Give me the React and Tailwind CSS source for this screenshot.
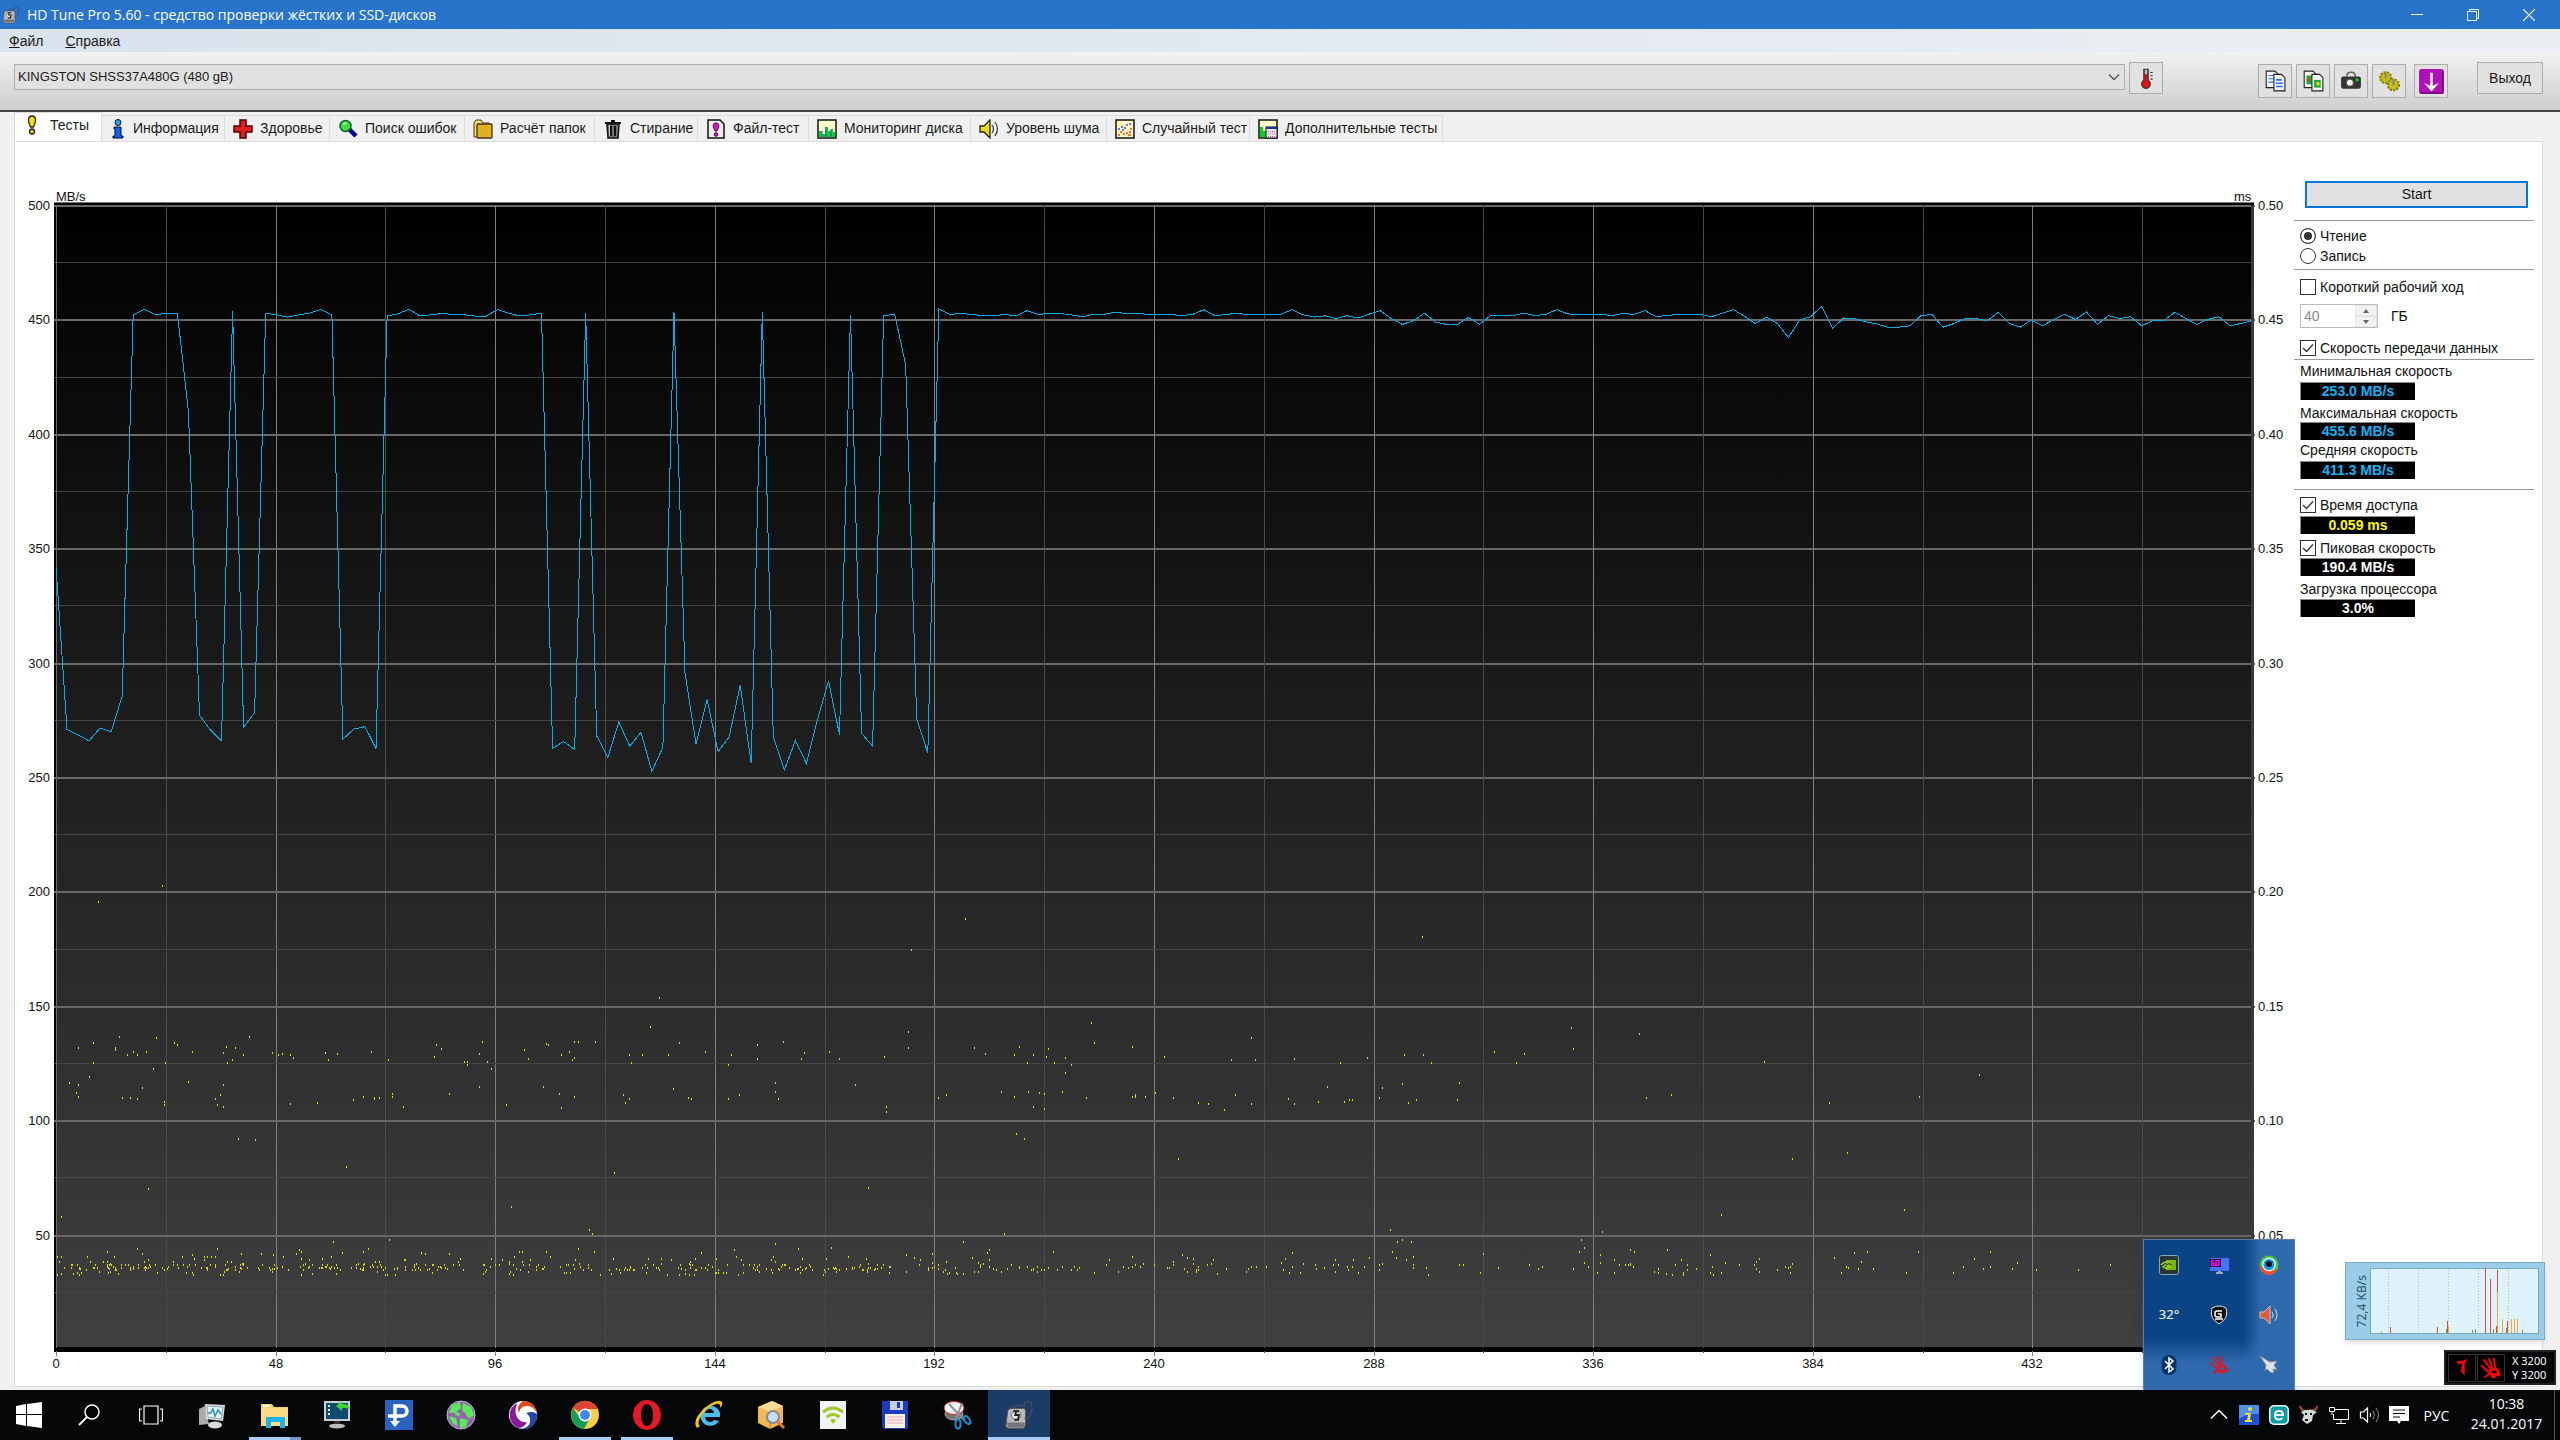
import React from "react";

/* ---------- benchmark data ---------- */

// Transfer rate samples in MB/s, evenly spaced over the disk
const RATES = [
  342, 270.8, 268.4, 265.8, 271.4, 269.8, 285.4, 452, 454.4, 452, 452.7, 452.7, 410, 277, 270.5, 265.8, 453.5, 271.7, 278, 452.7,
  452, 451, 452, 452.7, 454.4, 452, 266.5, 271, 272, 262.5, 451.5, 452.5, 454.4, 451.5, 452, 452.7, 452, 452, 451.5, 451.5,
  454.3, 452.7, 451.5, 452, 452.7, 262.5, 265.5, 262, 452.8, 268, 258.5, 274, 263.5, 269.5, 252.5, 263, 453, 295.5, 264.5, 284,
  261, 267.5, 290, 256, 453, 267.5, 253, 266, 256, 275, 292, 268.5, 452, 269, 263.5, 451.5, 452.3, 430, 275.5, 260.5,
  454.5, 452.2, 452.6, 452.2, 451.6, 451.6, 452.2, 451.5, 453.8, 452.2, 452.6, 452.6, 452, 451.2, 452.2, 452.2, 453.2, 452.5, 452.6, 452.2,
  452.2, 452.2, 451.6, 452.2, 454.3, 451.6, 452.2, 452.6, 452.2, 452.2, 452.2, 452.2, 454.3, 452, 451, 451.6, 450.4, 451.6, 450.6, 452.3,
  453.8, 450.4, 447.8, 449.4, 452.7, 448.8, 447.8, 447.8, 450.9, 447.8, 451.6, 451.6, 451.6, 452.7, 451.7, 452.2, 454.3, 452.4, 452.2, 452.2,
  452.2, 451.7, 452.6, 452.2, 453.8, 451.2, 451.7, 452.2, 452.2, 452.2, 451.2, 452.7, 454.3, 451.4, 448.2, 451, 448.2, 442.1, 449.7, 451.2,
  455.6, 446.2, 450.6, 450.3, 449, 448, 446.6, 446.6, 447.2, 451.6, 452.2, 446.6, 448.2, 450.4, 450.4, 449.4, 453, 448.2, 446.6, 449.7,
  447.2, 449.8, 452.3, 450, 453.2, 447.8, 451.6, 450.4, 451.2, 447.2, 449.4, 449.4, 453.2, 450.4, 447.8, 450, 451.2, 447.2, 448.2, 449.4,
];

// Access time samples, stored per segment in its own sampling grid
const SEGMENT_A = [
  [1148,51],[1133,137],[208,167],[271,171],[162,186],[304,186],[308,193],[136,201],[201,201],[201,208],[232,212],[254,212],[221,223],[238,223],[334,212],[162,246],[288,246],
  [434,167],[393,197],[410,201],[389,216],[424,223],[404,238],[395,246],[473,216],[484,223],[491,219],[506,223],[510,231],[267,264],[155,287],[121,306],[136,313],[132,336],[136,347],
  [247,321],[327,302],[389,313],[212,351],[227,351],[238,354],[286,362],[286,373],[384,343],[374,354],[378,373],[389,377],[567,216],[587,219],[571,238],[646,212],[676,238],
  [759,193],[768,204],[756,227],[839,182],[835,219],[809,242],[813,242],[813,253],[848,242],[855,264],[835,317],[783,339],[506,369],[552,366],[615,358],[632,347],[652,350],[652,354],[661,350],[683,339],[683,347],[702,377],
  [913,208],[920,234],[951,189],[954,193],[1000,182],[1007,182],[1037,182],[992,212],[977,223],[1000,231],[996,238],[1096,223],[1118,223],[1100,246],[1164,223],[1183,186],[1229,212],[1273,223],[1268,253],
  [1319,193],[1319,234],[1364,182],[1401,216],[1395,234],[1445,212],[1462,234],[1540,227],[946,317],[974,339],[1000,347],[881,373],[977,381],[1085,343],[1096,354],[1088,366],[1172,324],[1199,351],[1203,354],[1268,354],[1288,343],
  [1351,306],[1351,332],[1355,354],[1490,313],[1543,377],[1543,392],[415,474],[445,478],[602,557],[1070,576],[258,624],[1513,621],[106,707],[890,677],[1026,748],[1031,759],[580,782],[678,778],[1351,789],[1447,800],[1390,804],
  [186,812],[238,804],[378,804],[247,819],[334,823],[419,819],[454,819],[475,823],[521,808],[525,812],[515,819],[595,816],[641,804],[632,814],[733,816],[741,819],[783,819],[905,812],[909,812],[951,812],[1007,804],[1035,812],[1222,816],[1279,808],
  [282,-285],[171,-237],[1587,-93],[1681,-186],[2477,-132],
];
const SEGMENT_B = [
  [10,152],[10,201],[89,201],[102,219],[144,197],[137,223],[160,223],[176,227],[179,205],[153,246],[186,246],[199,231],[199,276],[206,253],[230,126],[234,186],[280,197],[319,227],[423,171],[399,238],[428,238],[475,234],[531,246],[563,231],[608,223],[631,223],[640,246],
  [46,351],[55,343],[122,332],[155,332],[168,336],[174,339],[195,332],[137,347],[224,351],[280,347],[284,343],[284,347],[295,347],[308,336],[329,351],[360,366],[372,369],[391,388],[404,343],[423,369],[468,354],[475,369],[515,317],[504,362],[535,362],[542,358],[545,358],[581,321],[578,351],[605,309],[613,366],[623,358],[674,306],[672,358],
  [160,377],[174,384],[140,459],[150,474],[335,534],[809,141],[892,160],[812,204],[717,212],[753,219],[743,246],[1042,242],[1301,283],[900,351],[930,343],[1121,366],[1229,347],[1142,516],[1076,534],[1211,688],[990,703],[591,748],[847,752],[125,759],[76,782],
  [600,782],[605,778],[616,782],[822,778],[825,801],[819,812],[7,823],[17,831],[38,819],[107,808],[105,816],[87,831],[185,812],[252,838],[280,827],[340,823],[346,831],[353,834],[378,838],[473,816],[465,834],[459,846],[525,838],[547,838],[566,831],[594,812],[598,831],[619,827],[610,838],[703,819],
  [844,823],[881,808],[886,812],[925,808],[942,838],[977,823],[1036,834],[1033,842],[1127,831],[1151,816],[1166,812],[1159,842],[1228,812],[1315,812],[1296,834],[1348,846],[1460,853],[1421,868],[1370,868],[1341,864],[1306,864],[1315,857],[1282,857],[1270,876],[1214,876],[1174,864],[1156,864],[1144,860],[1141,857],[1135,876],
  [1076,850],[1073,857],[1068,857],[1071,861],[1074,876],[1058,868],[1033,864],[1036,872],[1030,853],[1012,853],[995,846],[979,857],[977,876],[990,876],[981,883],[960,864],[949,853],[935,853],[949,868],[945,883],[945,876],[931,883],[914,864],[910,872],[914,876],[924,880],[881,850],[878,853],[881,853],[875,853],[867,853],[884,857],[861,838],[861,876],
  [844,846],[841,876],[825,846],[830,857],[812,864],[774,857],[770,864],[759,853],[721,861],[700,876],[674,853],[679,853],[637,883],[634,861],[619,853],[619,861],[581,850],[578,853],[578,868],[560,857],[553,876],[545,857],[539,857],[540,868],[528,853],[522,853],[525,872],[512,861],[500,853],[502,864],[486,850],[483,876],[469,876],[462,868],[473,857],
  [441,857],[430,857],[423,857],[420,864],[417,872],[393,864],[382,880],[375,850],[370,853],[360,857],[357,868],[357,872],[360,868],[353,850],[346,872],[343,864],[329,842],[329,853],[325,861],[322,861],[306,853],[293,850],[290,857],[283,853],[280,857],[275,861],[269,857],[263,872],[248,853],[234,876],[216,861],[213,868],[210,857],[206,868],[195,857],[189,868],[179,861],
  [174,868],[170,868],[165,857],[165,872],[160,864],[160,868],[158,868],[153,857],[143,857],[143,861],[134,853],[129,864],[122,872],[116,868],[112,864],[107,838],[107,857],[100,850],[97,853],[97,857],[94,872],[94,846],[89,872],[76,880],[69,880],[67,876],[66,861],[59,876],[57,880],[56,842],[54,868],[52,872],[46,853],[46,864],[41,857],[38,861],[38,846],[34,861],[34,868],[24,838],[23,853],[7,872],
];

function lowBand() {
  let seed = 20170124;
  const rnd = () => {
    seed = (seed * 1103515245 + 12345) % 2147483648;
    return seed / 2147483648;
  };
  const levels = [853, 853, 853, 853, 857, 857, 861, 861, 861, 865, 865, 868, 868, 868, 872, 876, 880, 883, 850, 842, 834, 838, 829];
  const out = [];
  for (let i = 0; i < 400; i++) {
    const x = 99 + Math.floor(Math.pow(rnd(), 1.15) * 1465);
    out.push([x, levels[Math.floor(rnd() * levels.length)]]);
  }
  return out;
}

const DOTS = [
  ...SEGMENT_A.concat(lowBand()).map(([x, y]) => [Math.round(x * 0.574), Math.round(980 + y / 3)]),
  ...SEGMENT_B.map(([x, y]) => [Math.round(900 + x * 0.829), Math.round(980 + y / 3)]),
];

/* ---------- chart ---------- */

const L = 56, R = 2252, T = 205, B = 1349;
const yOf = (v) => B - (v / 500) * (B - T);
const xOf = (k) => Math.round(L + (k * (R - L)) / 20);

function Chart() {
  const line = RATES.map((v, i) => `${(L + (i * (R - L)) / 199).toFixed(1)},${yOf(v).toFixed(1)}`).join(" ");
  const rows = Array.from({ length: 20 }, (_, i) => i);
  return (
    <svg viewBox="15 142 2279 1244" className="h-full w-full" fontFamily="'Liberation Sans', Arial, sans-serif" fontSize="13" fill="#111" role="img" aria-label="MB/s, ms">
      <defs>
        <linearGradient id="plot" x1="0" y1="0" x2="0" y2="1">
          <stop offset="0" stopColor="#000" />
          <stop offset="1" stopColor="#404040" />
        </linearGradient>
      </defs>
      <rect x="54" y="202" width="2200" height="1150" fill="#000" />
      <rect x="54" y="202" width="2200" height="1" fill="#777" />
      <rect x={L} y={T} width={R - L} height={B - T - 2} fill="url(#plot)" />
      {rows.map((i) => (
        <g key={i}>
          <rect x={54} y={Math.round(yOf(500 - i * 25))} width={i % 2 ? 2198 : 2201} height={i % 2 ? 1 : 2} fill={i % 2 ? "#444" : "#686868"} />
          <rect x={xOf(i)} y={T} width="1" height={i % 2 ? 1148 : 1151} fill={i % 2 ? "#4a4a4a" : "#808080"} />
        </g>
      ))}
      <rect x={L} y={T} width="1" height={B - T} fill="#6a6a6a" />
      <rect x="2251" y={T} width="3" height="1146" fill="#3a3a3a" />
      <rect x="54" y="1348" width="2200" height="3" fill="#000" />
      {DOTS.map(([x, y], i) => (
        <rect key={i} x={x} y={y} width="1" height="2" fill="#d8d810" />
      ))}
      <polyline points={line} fill="none" stroke="#00aeea" strokeWidth="1" shapeRendering="crispEdges" />
      <text x="56" y="201">MB/s</text>
      <text x="2234" y="201">ms</text>
      {Array.from({ length: 10 }, (_, i) => (
        <g key={i}>
          <text x="50" y={Math.round(yOf(500 - i * 50)) + 5} textAnchor="end">{500 - i * 50}</text>
          <text x="2258" y={Math.round(yOf(500 - i * 50)) + 5}>{(0.5 - i * 0.05).toFixed(2)}</text>
        </g>
      ))}
      {Array.from({ length: 10 }, (_, i) => (
        <text key={i} x={xOf(i * 2)} y="1368" textAnchor="middle">{i * 48}</text>
      ))}
    </svg>
  );
}

/* ---------- small drawings ---------- */

const Svg = ({ s = 20, vb = "0 0 20 20", children }) => (
  <svg viewBox={vb} width={s} height={s} className="shrink-0" aria-hidden="true">{children}</svg>
);

const HddIcon = ({ s = 20 }) => (
  <Svg s={s} vb="0 0 32 32">
    <path d="M4 11l3-2h15l1 3v14l-2 4H4l-2-2z" fill="#b9b9b9" stroke="#555" />
    <path d="M3 24h19v5H4z" fill="#777" />
    <circle cx="13" cy="16" r="5" fill="#e4e4e4" stroke="#777" />
    <path d="M10 12h6M13 12l-1 4 4 0-1 5h-4" stroke="#222" strokeWidth="2" fill="none" />
    <path d="M8 9q5-5 14-3V3q4-3 7 0l1 6q-1 7-5 11l-3-1" stroke="#4a4f55" strokeWidth="1.5" fill="none" />
  </Svg>
);

const TABS = [
  ["Тесты", "w-[88px]", <Svg key="i"><path d="M10 1c5 0 4 6 1.500 11h-3C6 7 5 1 10 1z" fill="#f0e000" stroke="#222" strokeWidth="1.300" /><circle cx="10" cy="16.500" r="2.500" fill="#e0d000" stroke="#222" strokeWidth="1.300" /></Svg>],
  ["Информация", "w-[123px]", <svg key="i" viewBox="2 0 16 20" width="16" height="20" className="shrink-0" aria-hidden="true"><circle cx="10" cy="3.500" r="3" fill="#20a8f0" stroke="#012" /><path d="M6 8h7v9h2v2H5v-2h2v-7H6z" fill="#1060f8" stroke="#012" /></svg>],
  ["Здоровье", "w-[105px]", <Svg key="i"><path d="M7 1h6v6h6v6h-6v6H7v-6H1V7h6z" fill="#e02020" stroke="#400" strokeWidth="1.500" /></Svg>],
  ["Поиск ошибок", "w-[135px]", <Svg key="i"><path d="M11 10l7 7" stroke="#000090" strokeWidth="4.500" /><circle cx="7.500" cy="7" r="5.500" fill="#40e040" stroke="#063" strokeWidth="1.500" /><path d="M5 5l3-1" stroke="#dfd" strokeWidth="1.500" /></Svg>],
  ["Расчёт папок", "w-[130px]", <Svg key="i"><path d="M1 4l2-3h5l2 3h6v14H1z" fill="#f0e070" stroke="#432" /><rect x="4" y="5" width="15" height="14" rx="1" fill="#e0b020" stroke="#432" strokeWidth="1.300" /></Svg>],
  ["Стирание", "w-[103px]", <Svg key="i"><path d="M4 5h12l-1 14H5z" fill="#777" stroke="#111" strokeWidth="1.500" /><path d="M2 4h16M8 2h4M8 7v10M12 7v10" stroke="#111" strokeWidth="2" /><path d="M6.500 6v11" stroke="#ccc" /></Svg>],
  ["Файл-тест", "w-[111px]", <Svg key="i"><path d="M2 1h12l4 4v14H2z" fill="#eee" stroke="#111" strokeWidth="1.500" /><path d="M10 4c4 0 3 4 1 8H9C7 8 6 4 10 4z" fill="#e010d0" stroke="#404" /><circle cx="10" cy="15.500" r="1.800" fill="#e010d0" stroke="#404" /></Svg>],
  ["Мониторинг диска", "w-[162px]", <Svg key="i"><rect x="1" y="1" width="18" height="18" fill="#ffffc8" stroke="#111" strokeWidth="1.500" /><path d="M2 18v-6h3v3h3V8h3v4h3v-2h2v3h2v5z" fill="#10d020" /><path d="M5 12v6M9 8v10M14 10v8" stroke="#3050f0" /></Svg>],
  ["Уровень шума", "w-[136px]", <Svg key="i"><path d="M1 7h4l6-6v18l-6-6H1z" fill="#e8d820" stroke="#221" strokeWidth="1.300" /><path d="M13 6q3 4 0 8M16 3q5 7 0 14" fill="none" stroke="#333" strokeWidth="1.200" /></Svg>],
  ["Случайный тест", "w-[143px]", <Svg key="i"><rect x="1" y="1" width="18" height="18" fill="#fff8b8" stroke="#111" strokeWidth="1.500" /><path d="M3 10h2M6 8h2M9 9h2M11 6h2M14 5h2M7 11h2" stroke="#3050e0" strokeWidth="1.300" /><path d="M3 16h2M5 13h2M8 15h2M11 14h2M14 13h2M13 16h3M15 10h2" stroke="#f04030" strokeWidth="1.300" /></Svg>],
  ["Дополнительные тесты", "w-[193px]", <Svg key="i"><rect x="1" y="1" width="18" height="18" fill="#ffffc8" stroke="#111" strokeWidth="1.500" /><path d="M2 18V8h3v4h3v6z" fill="#10d020" /><rect x="8" y="8" width="11" height="11" fill="#eef" stroke="#111" /><path d="M8 9h11" stroke="#1030c0" strokeWidth="2" /><path d="M10 12.500h8M10 15h8M10 17.500h8" stroke="#d05090" strokeDasharray="1 1" /></Svg>],
];

const page = "M2 1h8l3 3v12H2z";
const TOOLS = [
  ["Копировать текст", <Svg key="i" s={22}><path d={page} fill="#f4f4f4" stroke="#222" /><path d="M4 5h5M4 8h6M4 11h6" stroke="#2080f0" /><path d="M9 4h7l3 3v12H9z" fill="#f4f4f4" stroke="#222" /><path d="M11 9h5M11 12h6M11 15h6" stroke="#2070f0" strokeWidth="1.500" /></Svg>],
  ["Копировать снимок", <Svg key="i" s={22}><path d={page} fill="#f4f4f4" stroke="#222" /><path d="M4 5h5v8H4z" fill="#10b030" /><path d="M9 4h7l3 3v12H9z" fill="#f4f4f4" stroke="#222" /><path d="M11 9h6v7h-6z" fill="#10b030" /><path d="M13 11h3v3h-3z" fill="#f0d020" /><path d="M5 7h2v3H5z" fill="#f03020" /></Svg>],
  ["Снимок экрана", <Svg key="i" s={22}><path d="M6 6q0-4 4-4t4 4" fill="none" stroke="#666" strokeWidth="1.500" /><rect x="1" y="6" width="18" height="11" rx="2" fill="#333" /><circle cx="9" cy="11.500" r="3.200" fill="#eee" stroke="#555" /><circle cx="15.500" cy="9" r="1.500" fill="#20d020" /></Svg>],
  ["Настройки", <Svg key="i" s={22}><circle cx="7" cy="7" r="5" fill="#c8c010" /><circle cx="7" cy="7" r="5" fill="none" stroke="#8a8200" strokeWidth="2" strokeDasharray="2 1" /><circle cx="14" cy="13.500" r="5" fill="#c8c010" /><circle cx="14" cy="13.500" r="5" fill="none" stroke="#8a8200" strokeWidth="2" strokeDasharray="2 1" /><path d="M7 3v5M14 9v5" stroke="#888" strokeWidth="2" /></Svg>],
  ["Сохранить", <Svg key="i" s={25}><rect width="20" height="20" rx="2" fill="#b010b8" /><path d="M1 19h18V2" fill="none" stroke="#600068" /><path d="M10 3v12" stroke="#fff" strokeWidth="2" /><path d="M4 11l6 3 6-3-6 7z" fill="#fff" /></Svg>],
];

/* ---------- window parts ---------- */

function Header() {
  return (
    <header>
      <div className="flex h-[29px] items-center bg-[#2874cb] pl-[2px] text-white">
        <HddIcon s={18} />
        <h1 className="ml-[7px] flex-1 font-[Open_Sans,Noto_Sans,sans-serif] text-sm">HD Tune Pro 5.60 - средство проверки жёстких и SSD-дисков</h1>
        <button aria-label="Свернуть" className="grid h-full w-[56px] place-items-center"><Svg s={12} vb="0 0 12 12"><path d="M0 5.500h12" stroke="#fff" /></Svg></button>
        <button aria-label="Восстановить" className="grid h-full w-[56px] place-items-center"><Svg s={12} vb="0 0 12 12"><path d="M.5 2.500h9v9h-9zM2.500 2.500v-2h9v9h-2" fill="none" stroke="#fff" /></Svg></button>
        <button aria-label="Закрыть" className="mr-[3px] grid h-full w-[56px] place-items-center"><Svg s={12} vb="0 0 12 12"><path d="M0 0l12 12M12 0L0 12" stroke="#fff" strokeWidth="1.200" /></Svg></button>
      </div>
      <nav className="flex h-[23px] items-center gap-[22px] bg-linear-to-r from-[#dae2ed] to-[#ebeff3] pt-[2px] pl-[9px] text-[14px]">
        <button><u>Ф</u>айл</button>
        <button><u>С</u>правка</button>
      </nav>
      <div className="flex h-[60px] items-start border-b-2 border-[#444] bg-linear-to-b from-[#f2f2f2] to-[#cecece] pt-[10px] pr-[17px] pl-[14px]">
        <div className="mt-[2px] grid flex-1 items-center">
          <select aria-label="Диск" className="col-start-1 row-start-1 h-[26px] w-full appearance-none border border-[#adadad] bg-[#e1e1e1] pl-[3px] text-[13px]">
            <option>KINGSTON SHSS37A480G (480 gB)</option>
          </select>
          <svg viewBox="0 0 12 12" width="12" height="12" className="pointer-events-none col-start-1 row-start-1 mr-[5px] justify-self-end" aria-hidden="true"><path d="M1 3.500l5 5 5-5" fill="none" stroke="#555" strokeWidth="1.300" /></svg>
        </div>
        <button aria-label="Температура" className="ml-1 grid h-8 w-[34px] place-items-center border border-[#adadad] bg-[#e1e1e1]">
          <Svg s={22}><path d="M8 2h4v10a4 4 0 1 1-4 0z" fill="#e01010" stroke="#333" /><path d="M9 2.500h2v4H9z" fill="#7fe4e8" /><path d="M14 5h2M14 8h2M14 11h2" stroke="#333" /></Svg>
        </button>
        <div className="mt-[2px] ml-[95px] flex gap-1">
          {TOOLS.map(([name, icon], i) => (
            <button key={name} aria-label={name} className={i === 4 ? "ml-1 grid size-[34px] place-items-center border border-[#adadad] bg-[#e1e1e1]" : "grid size-[34px] place-items-center border border-[#adadad] bg-[#e1e1e1]"}>{icon}</button>
          ))}
        </div>
        <button className="ml-[29px] h-8 w-[66px] border border-[#adadad] bg-[#e1e1e1] text-[14px]">Выход</button>
      </div>
    </header>
  );
}

function Tabs() {
  return (
    <div role="tablist" className="flex h-[29px] items-end pl-[14px]">
      {TABS.map(([name, w, icon], i) => (
        <button key={name} role="tab" aria-selected={i === 0} className={`${w} flex items-center whitespace-nowrap text-[14px] ${i === 0 ? "h-[29px] gap-2 border-x border-t border-[#dcdcdc] bg-white pb-1 pl-[7px]" : "h-[26px] gap-[7px] border-t border-r border-[#dcdcdc] bg-[#f0f0f0] pl-[8px]"}`}>
          {icon}
          {name}
        </button>
      ))}
    </div>
  );
}

function Check({ label, checked = false, className }) {
  return (
    <label className={`${className} flex items-center gap-1 pl-[6px] whitespace-nowrap`}>
      <span className="grid size-4">
        <input type="checkbox" defaultChecked={checked} className="peer col-start-1 row-start-1 size-4 appearance-none border border-[#333] bg-white" />
        <svg viewBox="0 0 16 16" className="pointer-events-none invisible col-start-1 row-start-1 peer-checked:visible" aria-hidden="true"><path d="M3 8l3.500 3.500L13 4.500" fill="none" stroke="#333" strokeWidth="1.300" /></svg>
      </span>
      {label}
    </label>
  );
}

const Radio = ({ label, checked = false }) => (
  <label className="flex h-5 items-center gap-1 pl-[6px]">
    <input type="radio" name="mode" defaultChecked={checked} className="size-4 appearance-none rounded-full border border-[#333] bg-white checked:bg-[#333] checked:shadow-[inset_0_0_0_3px_white]" />
    {label}
  </label>
);

const Value = ({ className, children }) => (
  <output className={`${className} ml-[6px] flex h-[18px] w-[115px] items-center justify-center border-t border-l border-[#888] bg-black text-[14px] font-bold`}>{children}</output>
);

const Rule = ({ className }) => <hr className={`${className} border-t border-[#9a9a9a]`} />;

function Side() {
  return (
    <aside className="flex w-[240px] shrink-0 flex-col text-[14px] text-[#111]">
      <button className="mt-[39px] mr-[6px] ml-[11px] h-[27px] border-2 border-[#0078d7] bg-[#e1e1e1]">Start</button>
      <Rule className="mt-3" />
      <div className="mt-[5px]"><Radio label="Чтение" checked /><Radio label="Запись" /></div>
      <Rule className="mt-[3px]" />
      <Check className="mt-[7px] h-5" label="Короткий рабочий ход" />
      <div className="mt-[7px] flex h-6 items-center pl-[6px]">
        <div className="flex h-full w-[78px] border border-[#bbb]">
          <input aria-label="ГБ" defaultValue="40" disabled className="w-[54px] bg-white pl-[3px] text-[#8a8a8a]" />
          <div className="flex flex-1 flex-col gap-[2px] bg-[#e6e6e6] p-[1px]">
            <button aria-label="Больше" className="grid flex-1 place-items-center bg-[#f2f2f2]"><Svg s={6} vb="0 0 6 4"><path d="M0 4l3-4 3 4z" fill="#666" /></Svg></button>
            <button aria-label="Меньше" className="grid flex-1 place-items-center bg-[#f2f2f2]"><Svg s={6} vb="0 0 6 4"><path d="M0 0l3 4 3-4z" fill="#666" /></Svg></button>
          </div>
        </div>
        <span className="ml-[13px]">ГБ</span>
      </div>
      <Check className="mt-[10px] h-5" label="Скорость передачи данных" checked />
      <Rule className="mt-[1px]" />
      <p className="mt-[2px] h-[18px] pl-[6px] leading-[18px]">Минимальная скорость</p>
      <Value className="mt-[2px] text-[#10b4f8]">253.0 MB/s</Value>
      <p className="mt-1 h-[18px] pl-[6px] leading-[18px]">Максимальная скорость</p>
      <Value className="text-[#10b4f8]">455.6 MB/s</Value>
      <p className="mt-[1px] h-[18px] pl-[6px] leading-[18px]">Средняя скорость</p>
      <Value className="mt-[2px] text-[#10b4f8]">411.3 MB/s</Value>
      <Rule className="mt-[10px]" />
      <Check className="mt-[6px] h-[18px]" label="Время доступа" checked />
      <Value className="mt-[2px] text-[#ffff00]">0.059 ms</Value>
      <Check className="mt-[5px] h-[18px]" label="Пиковая скорость" checked />
      <Value className="mt-[1px] text-white">190.4 MB/s</Value>
      <p className="mt-1 h-[18px] pl-[6px] leading-[18px]">Загрузка процессора</p>
      <Value className="mt-[1px] text-white">3.0%</Value>
    </aside>
  );
}

/* ---------- desktop gadgets ---------- */

const Hand = ({ s = 20, color }) => (
  <Svg s={s} vb="0 0 22 22">
    <g fill="none" stroke={color} strokeWidth="2" strokeLinecap="round">
      <path d="M2 9l5 5M4 3l6 8M9 2l3 8M14 2l1 8" />
      <path d="M10 14q5-4 8 0 1 2 1 4" strokeWidth="3" />
      <path d="M9 16q4 3 9 1" strokeWidth="3" />
      <path d="M5 20l3-2M12 20l3 0" />
    </g>
  </Svg>
);

const TRAY = [
  ["NVIDIA", <Svg key="i"><rect x=".5" y=".5" width="19" height="19" rx="2" fill="#2c3434" stroke="#8aa" /><rect x="7" y="5" width="10" height="10" fill="#76b900" /><path d="M2 10q5-6 11 0-5 5-9 2 3-4 6-1" fill="none" stroke="#9c3" strokeWidth="1.500" /><path d="M7 10q3-3 6 0" fill="none" stroke="#232" /></Svg>],
  ["60", <Svg key="i"><rect x="1" y="3" width="19" height="13" fill="#4a70ff" /><rect x="1" y="4" width="11" height="8" fill="#100010" /><path d="M5 5.500H2.500v5H5V8H3M7 5.500h3v5H7z" fill="none" stroke="#f0f" strokeWidth="1.400" /><path d="M9 16h3v1h2v2H7v-2h2z" fill="#9ab" /></Svg>],
  ["Веб-камера", <Svg key="i"><circle cx="10" cy="10" r="9.500" fill="#50c040" /><path d="M1 11a9 9 0 0 0 17 4z" fill="#f05020" /><circle cx="10" cy="9.500" r="7" fill="#d8f0f8" /><circle cx="10" cy="9.500" r="5.500" fill="#109ae0" /><circle cx="10" cy="9" r="3" fill="#111" /></Svg>],
  ["32°", null],
  ["Gigabyte", <Svg key="i"><path d="M3 3q7-4 14 0 2 8-2 12l-5 4-5-4Q1 11 3 3z" fill="#111" stroke="#ddd" /><path d="M13 6H8q-2 0-2 2v2q0 2 2 2h4V9H9M6 14h8" fill="none" stroke="#fff" strokeWidth="1.500" /></Svg>],
  ["Звук", <Svg key="i"><path d="M1 7h4l6-6v18l-6-6H1z" fill="#d86040" stroke="#f0b0a0" /><path d="M13 7q2 3 0 6M16 4q4 6 0 12" fill="none" stroke="#9cc4e8" strokeWidth="1.300" /></Svg>],
  ["Bluetooth", <Svg key="i"><rect x="2.500" width="15" height="20" rx="7" fill="#0a3468" /><path d="M6 6l8 8-4 3V3l4 3-8 8" fill="none" stroke="#fff" strokeWidth="1.500" /></Svg>],
  ["Bloody", <Hand key="i" color="#d81828" />],
  ["Самолёт", <Svg key="i"><path d="M1 1l5 3 5 3 7-1-3 4 3 5-4-1 1 4-4-1-3-3-2 2 1-6-4-6z" fill="#dde2e6" stroke="#889" /></Svg>],
];

function TrayPopup() {
  return (
    <div className="absolute right-[265px] bottom-[50px] grid grid-cols-3 border-x border-t border-[#5b7b9f] bg-[#0b4484] bg-[linear-gradient(to_right,rgba(48,106,174,0)_66%,rgb(48,106,174)_78%),linear-gradient(to_bottom,rgba(48,106,174,0)_66%,rgb(48,106,174)_82%)] shadow-lg">
      {TRAY.map(([name, icon]) => (
        <button key={name} aria-label={name} className="grid size-[50px] place-items-center font-[Noto_Sans,sans-serif] text-[13px] text-white">{icon || name}</button>
      ))}
    </div>
  );
}

function NetGadget() {
  const bars = [[20, 6, "#e8483c"], [67, 6, "#e8483c"], [77, 12, "#e8483c"], [78, 7, "#f2a63c"], [115, 65, "#e8483c"], [120, 54, "#e8483c"], [127, 63, "#e8483c"], [127, 41, "#f2a63c"], [126, 7, "#e8483c"], [132, 14, "#f2a63c"], [137, 12, "#e8483c"], [136, 5, "#5a9e50"], [141, 14, "#f2a63c"], [144, 14, "#f2a63c"], [147, 14, "#f2a63c"], [123, 4, "#5a9e50"], [102, 3, "#5a9e50"], [105, 4, "#5a9e50"], [76, 4, "#5a9e50"], [152, 3, "#5a9e50"], [11, 1, "#5a9e50"]];
  return (
    <div className="absolute right-[15px] bottom-[100px] flex h-[78px] w-[200px] items-center border border-[#7aaac4] bg-[#99cde8] pr-[5px] pl-[9px] text-[#34576a] shadow-md">
      <span className="mr-[1px] rotate-180 font-[Noto_Sans,sans-serif] text-[12px] leading-[14px] whitespace-nowrap [writing-mode:vertical-rl]">72,4 KB/s</span>
      <svg viewBox="0 0 169 66" className="h-[66px] flex-1" aria-hidden="true">
        <rect x=".5" y=".5" width="168" height="65" fill="#dff3fd" stroke="#7aa9bd" />
        {[18, 48, 78, 108, 138].map((x) => <path key={x} d={`M${x}.5 2V64`} stroke="#a9b9c0" strokeDasharray="1 2" />)}
        {bars.map(([x, h, c], i) => <rect key={i} x={x} y={65 - h} width="1" height={h} fill={c} />)}
      </svg>
    </div>
  );
}

function MouseGadget() {
  return (
    <div className="absolute right-1 bottom-[55px] flex h-[35px] w-[112px] items-center gap-[1px] border-2 border-[#222] bg-black pl-[2px] font-[Noto_Sans,sans-serif] text-[11px] leading-[14px] text-white">
      <span className="grid size-7 shrink-0 place-items-center border border-[#333]"><Svg s={22} vb="0 0 20 24"><path d="M4 5l7-1 5-2-3 5v13l-4-4 1-9-4 1z" fill="#f00" /></Svg></span>
      <span className="grid size-7 shrink-0 place-items-center border border-[#333]"><Hand s={22} color="#f00" /></span>
      <span className="ml-[6px] whitespace-nowrap">X 3200<br />Y 3200</span>
    </div>
  );
}

/* ---------- taskbar ---------- */

const K = ({ children }) => <Svg s={30} vb="0 0 30 30">{children}</Svg>;
const APPS = [
  ["Монитор", <K key="i"><path d="M1 9l6-3 4 18-10 1z" fill="#aaa" /><path d="M7 4l20 1-2 16-17-2z" fill="#ddd" /><path d="M9 6l16 1-2 12-13-2z" fill="#e6f2f6" stroke="#8aa" /><path d="M10 13l3 0 2-4 2 7 3-6 3 4" fill="none" stroke="#2890b8" strokeWidth="1.500" /><ellipse cx="17" cy="25" rx="7" ry="3.500" fill="#d8dcdc" /></K>, ""],
  ["Проводник", <K key="i"><path d="M1 4h11l2 3h14v19H1z" fill="#f5cf62" /><path d="M1 8h27v18H1z" fill="#fbdc83" /><path d="M3 5h7v2H3z" fill="#fff" /><path d="M6 17h19v11h-5v-6h-9v6H6z" fill="#1cb4ec" /></K>, "split"],
  ["Рабочий стол", <K key="i"><rect x="2" y="1" width="26" height="20" fill="#c8d0d0" /><rect x="4" y="3" width="22" height="16" fill="#134a70" /><path d="M7 5v11" stroke="#e8f0f4" strokeWidth="2" strokeDasharray="2 2" /><path d="M14 6l6-5v3q7-1 8 6-4-3-8-2v3z" fill="#40d830" /><ellipse cx="15" cy="26" rx="8" ry="2.500" fill="#bbb" /><path d="M12 21h6v3h-6z" fill="#333" /></K>, ""],
  ["Punto", <K key="i"><path d="M1 0h28v30H1z" fill="#2a62c0" /><path d="M11 24V6h7a5 5 0 0 1 0 10H4" fill="none" stroke="#fff" strokeWidth="3.500" /><path d="M6 21h10l-5 6z" fill="#fff" /></K>, ""],
  ["Сеть", <K key="i"><circle cx="15" cy="15" r="14" fill="#9464ac" stroke="#c8b8d8" /><path d="M6 5l8-3 1 6-6 5-6 0zM17 3l8 4 3 8-5 4-4-6-3-3zM3 16l7 2 2 8-5-2zM14 18l8 2-2 7-6 1zM10 12l4 1-1 3-4-1z" fill="#58ec58" /></K>, ""],
  ["Спираль", <K key="i"><circle cx="15" cy="15" r="14" fill="#fff" /><path d="M15 1A14 14 0 0 1 29 14q-3-8-10-8-7 0-8 7-3-7 4-12z" fill="#e04818" /><path d="M29 15a14 14 0 0 1-17 14q9-1 10-7 1-6-4-9 9-3 11 2z" fill="#2048a8" /><path d="M10 28A14 14 0 0 1 9 3q-3 9 0 14 3 6 10 5-3 6-9 6z" fill="#8c189c" /></K>, ""],
  ["Chrome", <K key="i"><circle cx="15" cy="15" r="14" fill="#ffcd40" /><path d="M15 15L3 8a14 14 0 0 1 24-1l1 2H15z" fill="#db4437" /><path d="M3 8a14 14 0 0 0 11 21l6-11-5-3-5 3z" fill="#0f9d58" /><circle cx="15" cy="15" r="6.500" fill="#fff" /><circle cx="15" cy="15" r="5" fill="#4285f4" /></K>, "on"],
  ["Opera", <K key="i"><path fillRule="evenodd" d="M15 0a14 15 0 1 0 0 30 14 15 0 1 0 0-30zm0 4c4 0 6 5 6 11s-2 11-6 11-6-5-6-11 2-11 6-11z" fill="#e41828" /></K>, "on"],
  ["Internet Explorer", <K key="i"><path d="M25 21a10 10 0 1 1 1-8v4H11q1 5 5 5 3 0 4-2zM11 13h9q-1-4-4-4-4 0-5 4z" fill="#48bdf0" fillRule="evenodd" /><path d="M3 28Q-3 20 12 7 24-2 28 2q1 3-2 6 1-5-4-4Q12 7 6 18q-3 6 0 8z" fill="#f3c21c" /></K>, ""],
  ["Поиск файлов", <K key="i"><path d="M2 7l14-6 11 5v17l-13 6-12-6z" fill="#efb850" /><path d="M2 7l12 5 13-6-11-5z" fill="#f9dd94" /><path d="M14 12v17" stroke="#b88020" /><circle cx="17" cy="17" r="6" fill="#c4e0f0" stroke="#889" strokeWidth="2" /><path d="M22 22l6 6" stroke="#e87820" strokeWidth="3" /></K>, ""],
  ["Wi-Fi", <K key="i"><rect x="2" y="1" width="26" height="28" fill="#f2f4f0" /><path d="M5 12q10-8 20 0M8.500 17q6.500-5 13 0" fill="none" stroke="#9cc828" strokeWidth="3" /><path d="M12 20q3-2 6 0l-3 4z" fill="#9cc828" /></K>, ""],
  ["Total Commander", <K key="i"><path d="M2 1h26v28H4l-2-2z" fill="#1c3cc0" /><path d="M10 1h13v9H10z" fill="#c8d0dc" /><path d="M17 2h3v6h-3z" fill="#1c3cc0" /><path d="M5 14h20v14H5z" fill="#f8f4f4" /><path d="M7 17h16M7 20h16M7 23h16" stroke="#f0a0a0" /></K>, ""],
  ["Ножницы", <K key="i"><ellipse cx="12" cy="14" rx="9" ry="6" fill="#777" stroke="#aaa" /><ellipse cx="12" cy="8" rx="10" ry="6.500" fill="#f4f4f4" stroke="#d82030" /><path d="M7 4l15 16M20 3l-6 16" stroke="#8a9298" strokeWidth="2" /><ellipse cx="16" cy="24" rx="2.500" ry="4.500" fill="none" stroke="#2090d0" strokeWidth="2" /><ellipse cx="25" cy="20" rx="2.500" ry="4.500" fill="none" stroke="#2090d0" strokeWidth="2" transform="rotate(-35 25 20)" /></K>, ""],
  ["HD Tune Pro", <HddIcon key="i" s={30} />, "active"],
];

function Taskbar() {
  return (
    <footer className="flex h-[50px] shrink-0 items-stretch bg-[#050709] text-white">
      <button aria-label="Пуск" className="grid w-[58px] place-items-center"><Svg s={26} vb="0 0 26 26"><path d="M0 4l10-2v10H0zM11 2l15-2v12H11zM0 13h10v11L0 22zM11 13h15v13l-15-2z" fill="#fff" /></Svg></button>
      <button aria-label="Поиск" className="grid w-[62px] place-items-center"><Svg s={22} vb="0 0 22 22"><circle cx="14" cy="8" r="7" fill="none" stroke="#fff" strokeWidth="1.500" /><path d="M9 13l-8 8" stroke="#fff" strokeWidth="1.800" /></Svg></button>
      <button aria-label="Представление задач" className="grid w-[62px] place-items-center"><Svg s={24} vb="0 0 24 24"><path d="M5 3h14v18H5zM3 6H.5v12H3M21 6h2.500v12H21" fill="none" stroke="#fff" strokeWidth="1.200" /></Svg></button>
      {APPS.map(([name, icon, state]) => (
        <button key={name} aria-label={name} className={state === "active" ? "grid w-[62px] grid-rows-[1fr_3px] bg-[#1a3c66]" : "grid w-[62px] grid-rows-[1fr_3px]"}>
          <span className="place-self-center pt-[3px]">{icon}</span>
          {state === "active" && <span className="h-[3px] bg-[#a8ccfa]" />}
          {state === "on" && <span className="mx-[5px] h-[3px] bg-[#a8ccfa]" />}
          {state === "split" && <span className="mx-[5px] h-[3px] border-r-[11px] border-[#7898c4] bg-[#a8ccfa]" />}
        </button>
      ))}
      <div className="flex-1" />
      <div className="flex items-center">
        <button aria-label="Скрытые значки" className="grid w-[30px] place-items-center"><Svg s={18}><path d="M1 14l9-9 9 9" fill="none" stroke="#fff" strokeWidth="1.600" /></Svg></button>
        <button aria-label="Информация о системе" className="grid w-[30px] place-items-center"><Svg><rect width="20" height="20" fill="#1a50d8" /><path d="M0 0h20v9Q8 8 0 14z" fill="#4c90f0" /><circle cx="11" cy="4" r="2" fill="#ffe020" /><path d="M6 8h6l-1 7h2v2H6v-2h2l1-5H6z" fill="#ffe020" /></Svg></button>
        <button aria-label="ESET" className="grid w-[30px] place-items-center"><Svg><rect width="20" height="20" rx="5" fill="#e8f8f8" /><rect x="1.500" y="1.500" width="17" height="17" rx="4" fill="#0a9ca4" /><path d="M6 10h8q0-4-4-4t-4 4q0 5 4 4.500 2 0 3.500-1.500" fill="none" stroke="#fff" strokeWidth="2" /></Svg></button>
        <button aria-label="Bull" className="grid w-[30px] place-items-center"><Svg><path d="M1 1q1 4 5 5l8-1q4 0 4-4" fill="none" stroke="#a05030" strokeWidth="2" /><path d="M2 7l4-2h7l5 2-4 3-1 6-5 3-5-4 2-5z" fill="#d4d8d8" /><path d="M7 8v2M12 8v2M6 15h3" stroke="#111" strokeWidth="2" /></Svg></button>
        <button aria-label="Сеть" className="grid w-[30px] place-items-center"><Svg><path d="M5 4.500h14.500v10H4.500V9M12 15v3M7 18.500h10M.5 2.500h5v4h-5zM3 7v3" fill="none" stroke="#fff" /></Svg></button>
        <button aria-label="Громкость" className="grid w-[30px] place-items-center"><Svg><path d="M1.500 7h3l4-4v14l-4-4h-3z" fill="none" stroke="#fff" strokeWidth="1.200" /><path d="M11 8q1.500 2 0 4" fill="none" stroke="#fff" /><path d="M14 6q3 4 0 8M17 3q5 7 0 14" fill="none" stroke="#888" /></Svg></button>
        <button aria-label="Уведомления" className="grid w-[30px] place-items-center"><Svg><path d="M0 1h20v15h-8l-2 3-2-3H0z" fill="#fff" /><path d="M4 5h12M4 8.500h12M4 12h7" stroke="#050709" strokeWidth="1.200" /></Svg></button>
        <button className="w-[45px] font-[Open_Sans,Noto_Sans,sans-serif] text-[14px]">РУС</button>
        <time className="w-[95px] pb-[2px] text-center font-[Open_Sans,Noto_Sans,sans-serif] text-[14px] leading-[20px]">10:38<br />24.01.2017</time>
      </div>
      <button aria-label="Свернуть все окна" className="w-[6px] border-l border-[#555]" />
    </footer>
  );
}

export default function App() {
  return (
    <div className="relative flex h-screen flex-col overflow-hidden bg-[#f0f0f0] font-[Liberation_Sans,Arial,sans-serif] text-[#1a1a1a]">
      <Header />
      <main className="flex min-h-0 flex-1 flex-col">
        <Tabs />
        <div className="mr-[17px] mb-[3px] ml-[14px] flex min-h-0 flex-1 border border-[#dcdcdc] bg-white">
          <div className="min-w-0 flex-1"><Chart /></div>
          <Side />
          <div className="w-2 shrink-0" />
        </div>
      </main>
      <Taskbar />
      <NetGadget />
      <MouseGadget />
      <TrayPopup />
    </div>
  );
}
